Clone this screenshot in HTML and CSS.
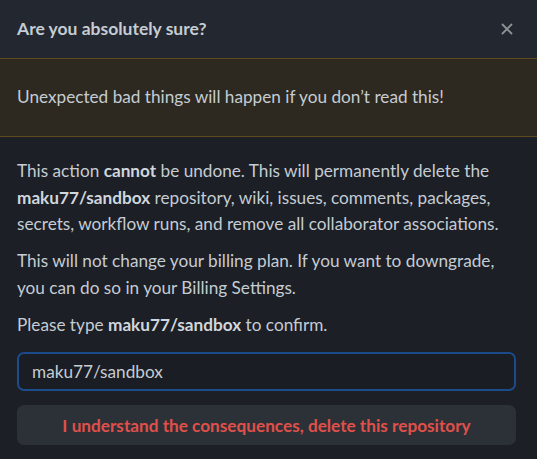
FILE: index.html
```html
<!DOCTYPE html>
<html>
<head>
<meta charset="utf-8">
<link rel="stylesheet" href="styles.css">
</head>
<body>
<div class="dialog">
  <div class="header">
    <h1 class="title">Are you absolutely sure?</h1>
    <button class="close" aria-label="Close">
      <svg width="16" height="16" viewBox="0 0 16 16"><path d="M3.5 3.5 L12.5 12.5 M12.5 3.5 L3.5 12.5" stroke="currentColor" stroke-width="1.8" stroke-linecap="round" fill="none"/></svg>
    </button>
  </div>
  <div class="flash">Unexpected bad things will happen if you don’t read this!</div>
  <div class="body">
    <p>This action <strong>cannot</strong> be undone. This will permanently delete the <strong>maku77/sandbox</strong> repository, wiki, issues, comments, packages, secrets, workflow runs, and remove all collaborator associations.</p>
    <p>This will not change your billing plan. If you want to downgrade, you can do so in your Billing Settings.</p>
    <p>Please type <strong>maku77/sandbox</strong> to confirm.</p>
    <input class="field" type="text" value="maku77/sandbox">
    <button class="danger">I understand the consequences, delete this repository</button>
  </div>
</div>
</body>
</html>
```

FILE: styles.css
```css
* { box-sizing: border-box; }
html, body { margin: 0; padding: 0; background: #1c1f26; }
body {
  font-family: Lato, "Noto Sans", sans-serif;
  color: #c5ccd3;
  font-size: 17.2px;
  line-height: 26.5px;
  width: 537px;
  height: 459px;
  overflow: hidden;
}
.dialog { display: flex; flex-direction: column; }
.header {
  background: #23272f;
  height: 58px;
  padding: 0 21px 0 17px;
  display: flex;
  align-items: center;
  justify-content: space-between;
}
.title {
  margin: 0;
  font-size: 17.5px;
  font-weight: 700;
  color: #c5ccd3;
  line-height: 26px;
}
.close {
  background: none;
  border: 0;
  padding: 0;
  width: 24px;
  height: 24px;
  display: flex;
  align-items: center;
  justify-content: center;
  color: #8f9296;
  margin-right: -3px;
}
.flash {
  background: #2d2920;
  border-top: 1px solid #5f4a1d;
  border-bottom: 1px solid #5f4a1d;
  height: 79px;
  padding: 0 17px;
  display: flex;
  align-items: center;
  color: #c5ccd3;
}
.body {
  padding: 21px 21px 14px 17px;
  display: flex;
  flex-direction: column;
}
.body p { margin: 0 0 10.5px; }
.body p:nth-of-type(3) { margin-bottom: 14px; }
strong { font-weight: 700; color: #d0d6dc; }
.field {
  height: 39px;
  border: 2px solid #1c4b8c;
  border-radius: 7px;
  background: #1a1d23;
  color: #c5ccd3;
  font-family: inherit;
  font-size: 17.2px;
  padding: 0 13px;
  outline: none;
}
.danger {
  margin-top: 14px;
  height: 40px;
  border: 0;
  border-radius: 7px;
  background: #2c3037;
  color: #e0504a;
  font-family: inherit;
  font-size: 17.2px;
  font-weight: 700;
}
```
